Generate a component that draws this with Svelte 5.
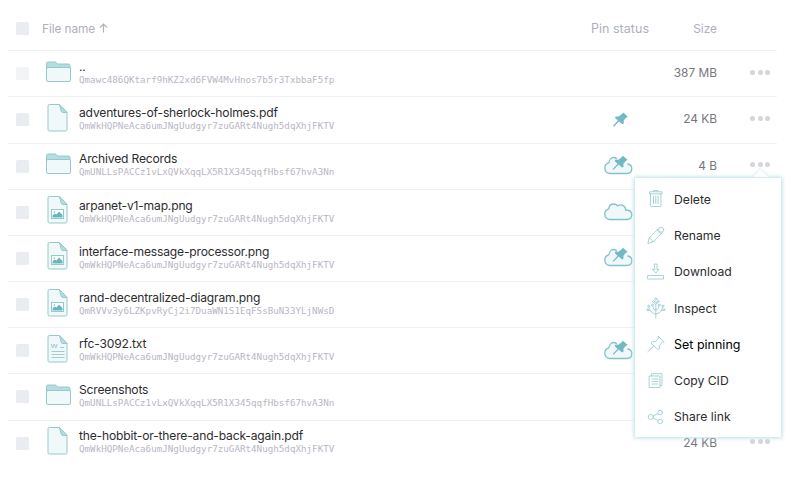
<script>
  const shared = 'QmWkHQPNeAca6umJNgUudgyr7zuGARt4Nugh5dqXhjFKTV';
  const folderCid = 'QmUNLLsPACCz1vLxQVkXqqLX5R1X345qqfHbsf67hvA3Nn';
  const files = [
    { name: '..', cid: 'Qmawc486QKtarf9hKZ2xd6FVW4MvHnos7b5r3TxbbaF5fp', icon: 'folder', pin: '', size: '387 MB', muted: true },
    { name: 'adventures-of-sherlock-holmes.pdf', cid: shared, icon: 'doc', pin: 'local', size: '24 KB' },
    { name: 'Archived Records', cid: folderCid, icon: 'folder', pin: 'both', size: '4 B' },
    { name: 'arpanet-v1-map.png', cid: shared, icon: 'image', pin: 'remote', size: '' },
    { name: 'interface-message-processor.png', cid: shared, icon: 'image', pin: 'both', size: '' },
    { name: 'rand-decentralized-diagram.png', cid: 'QmRVVv3y6LZKpvRyCj2i7DuaWN1S1EqFSsBuN33YLjNWsD', icon: 'image', pin: '', size: '' },
    { name: 'rfc-3092.txt', cid: shared, icon: 'text', pin: 'both', size: '' },
    { name: 'Screenshots', cid: folderCid, icon: 'folder', pin: '', size: '' },
    { name: 'the-hobbit-or-there-and-back-again.pdf', cid: shared, icon: 'doc', pin: '', size: '24 KB' }
  ];
  const actions = ['Delete', 'Rename', 'Download', 'Inspect', 'Set pinning', 'Copy CID', 'Share link'];
</script>

{#snippet fileIcon(kind)}
  {#if kind === 'folder'}
    <svg width="27" height="30" viewBox="0 0 27 30" fill="none" stroke="#94cace">
      <path d="M1.500 13V6.500q0-1.500 1.500-1.500h7q1 0 1.600 1t1.600 1h10.300q1.500 0 1.500 1.500V13z" fill="#b5dde0" />
      <rect x="1.500" y="10.500" width="24" height="14" rx="1.500" fill="#f0f8fa" />
    </svg>
  {:else}
    <svg width="27" height="30" viewBox="0 0 27 30" fill="none" stroke="#94cace">
      <path d="M4.500 1.500h10l7.500 8v17q0 1.500-1.500 1.500h-16q-1.500 0-1.500-1.500V3q0-1.500 1.500-1.500z" fill="#f0f8fa" />
      <path d="M14.500 1.500l7.500 8h-4q-1.800 0-2-2z" fill="#b5dde0" />
      {#if kind === 'image'}
        <rect x="6.500" y="14.500" width="12" height="9" fill="#fff" />
        <path d="M7.500 22.500v-2l2-2 2 1 2.500-3 3.500 3.500v2.500z" fill="#69b5bd" stroke="none" />
        <circle cx="9.500" cy="17" r=".8" fill="#69b5bd" stroke="none" />
      {:else if kind === 'text'}
        <path d="M6.300 10l1.300 4 1.600-4 1.600 4 1.400-4M15 13.500h4M6.500 17.500h13M6.500 20.500h13M6.500 23.500h13" stroke-width=".9" />
      {/if}
    </svg>
  {/if}
{/snippet}

{#snippet pinIcon(kind)}
  <svg width="30" height="22" viewBox="0 0 30 22" fill="none">
    {#if kind !== 'local'}
      <path
        d={kind === 'remote'
          ? 'M6.500 19.500a5.500 5.500 0 0 1-.8-10.700Q6.500 3.800 11 4q2.500.2 3.600 1.800 4.400-2.300 7.200 1.200 1 1.200.8 3Q28.800 10 28.800 14.500q0 5-5 5z'
          : 'M13.500 4.300Q7.500 1.500 5.700 8.800A5.500 5.500 0 0 0 6.500 19.500h17.300q5 0 5-5 0-3.800-4-4.500'}
        fill="#f0f8fa" stroke="#84c2c8" stroke-width="1.300" stroke-linecap="round" />
    {/if}
    {#if kind !== 'remote'}
      <g transform={kind === 'local' ? 'translate(1.500 2)' : 'translate(1.200 -.8)'}>
        <path d="M18.700 2.500l4.800 4.200-1.700.8-2.600 3 .1 3-1.400.8-3.400-2.900-4.900 5-1 .2.200-1 4.600-5.100-3-2.800.9-1.300 3 .1 3.400-2.800z" fill="#72bac1" />
      </g>
    {/if}
  </svg>
{/snippet}

{#snippet actionIcon(i)}
  <svg width="20" height="24" viewBox="0 0 20 24" fill="none" stroke="#9dcfd4" stroke-width=".9" stroke-linecap="round" stroke-linejoin="round">
    {#if i === 0}
      <path d="M4.500 6.500v12q0 1 1 1h8.500q1 0 1-1v-12M3.500 6.500v-1.700h12.500v1.700zM7.500 4.600V3.500h4.500v1.100M7.500 9v7.500M9.800 9v7.500M12.100 9v7.500" />
    {:else if i === 1}
      <path d="M2 20l1.100-5 9.200-9.200 3.900 3.900-9.200 9.200zM3.200 15q2.800.5 3.700 3.800M11 7.200l3.800 3.800" />
      <circle cx="15.200" cy="6.700" r="2.500" fill="#fff" />
    {:else if i === 2}
      <path d="M2 15.500h15.500v3.500H2zM8.500 4h2.500v5.500H13l-3.200 3.500-3.300-3.500h2z" />
    {:else if i === 3}
      <path d="M9.800 22V8M9.800 18q-5.800-.5-7-7M9.800 18q5.800-.5 7-7M9.800 14.500q-3-1-3.300-5M9.800 14.500q3-1 3.300-5M4.500 14.500L1.800 14M15.100 14.500l2.700-.5" />
      <g fill="#fff">
        <circle cx="9.800" cy="3" r="1.100" /><circle cx="7.500" cy="5.500" r="1" /><circle cx="12.100" cy="5.500" r="1" />
        <circle cx="9.800" cy="7.200" r="1.100" /><circle cx="6.400" cy="9" r=".9" /><circle cx="13.200" cy="9" r=".9" />
        <circle cx="2.700" cy="10" r="1" /><circle cx="16.900" cy="10" r="1" /><circle cx="1.500" cy="13.700" r=".8" /><circle cx="18.100" cy="13.700" r=".8" />
      </g>
    {:else if i === 4}
      <path d="M12.200 4.200l6 5.700-2 .3-3 3.600.2 3-1.600.8-6.800-6.500 1.200-1.500 3 .2 3.200-3.500zM7.800 14l-6 5.700" />
    {:else if i === 5}
      <path d="M3.500 7h10.500v11.500H3.500zM5.500 6.800V4.700H16v11.800h-1.800M6 10h5.800M6 12.500h5.800M6 15h5.800" />
    {:else}
      <circle cx="4.800" cy="12" r="2.600" /><circle cx="14.200" cy="7.500" r="2.300" /><circle cx="14.200" cy="16.500" r="2.300" />
      <path d="M7.200 11l4.800-2.500M7.200 13l4.800 2.500" />
    {/if}
  </svg>
{/snippet}

<main class="browser">
  <header class="row head">
    <span class="check"></span>
    <span class="title">File name <svg width="9" height="10" viewBox="0 0 9 10" fill="none" stroke="currentColor" stroke-width="1.100"><path d="M4.500 9.500V1M1 4.500L4.500 1 8 4.500" /></svg></span>
    <span class="pin">Pin status</span>
    <span class="size">Size</span>
    <span class="dots"></span>
  </header>
  {#each files as file}
    <div class="row file">
      <span class="check" class:muted={file.muted}></span>
      <span class="icon">{@render fileIcon(file.icon)}</span>
      <div class="info">
        <div class="name">{file.name}</div>
        <div class="cid">{file.cid}</div>
      </div>
      <span class="pin">{#if file.pin}{@render pinIcon(file.pin)}{/if}</span>
      <span class="size">{file.size}</span>
      <span class="dots"><i></i><i></i><i></i></span>
    </div>
  {/each}
  <nav class="menu">
    {#each actions as action, i}
      <div class="action" class:active={i === 4}>
        {@render actionIcon(i)}<span>{action}</span>
      </div>
    {/each}
  </nav>
</main>

<style>
  :global(body) { background: #fff; }
  .browser {
    position: relative;
    box-sizing: border-box;
    width: 801px;
    height: 478px;
    padding: 5px 24px 0 8px;
    overflow: hidden;
    font-family: Inter, 'Open Sans', sans-serif;
    color: #2c2c30;
  }
  .row {
    display: flex;
    align-items: center;
    box-sizing: border-box;
    height: 46.180px;
    border-bottom: 1px solid #f0f2f4;
  }
  .file:last-of-type { border-color: transparent; }
  .head { color: #b0b0ba; font-size: 12.500px; padding-top: 2px; }
  .check {
    flex: none;
    width: 13px;
    height: 13px;
    margin-left: 8px;
    border-radius: 1.500px;
    background: #e9edf1;
  }
  .check.muted { background: #f1f3f5; }
  .title { flex: 1; margin-left: 13px; font-size: 11.900px; letter-spacing: -.1px; }
  .icon { flex: none; width: 27px; height: 30px; margin: -4px 0 0 16px; }
  svg { display: block; }
  .title svg { display: inline-block; margin-left: 1px; }
  .info { flex: 1; min-width: 0; margin: -3.500px 0 0 7px; }
  .name { font-size: 12.100px; letter-spacing: -.18px; line-height: 15px; white-space: nowrap; }
  .cid {
    font: 9.220px/11px 'DejaVu Sans Mono', monospace;
    color: #b9b6c4;
    white-space: nowrap;
  }
  .pin { flex: none; display: flex; justify-content: center; width: 80px; white-space: nowrap; letter-spacing: .04px; }
  .file .pin { margin: -2px 2px 0 -2px; }
  .size { flex: none; width: 57px; margin-right: 1px; text-align: right; font-size: 11.900px; color: #77777e; white-space: nowrap; }
  .head .size { color: inherit; }
  .file .size { margin-top: -2px; }
  .dots { flex: none; display: flex; gap: 2.600px; width: 27px; margin: -3px 0 0 32px; }
  .dots i { width: 5px; height: 5px; border-radius: 50%; background: #d5d5da; }
  .menu {
    position: absolute;
    left: 635px;
    top: 178px;
    box-sizing: border-box;
    width: 146px;
    height: 259px;
    padding-top: 3px;
    background: #fff;
    box-shadow: 0 0 4px 1px #b9dfe3;
  }
  .menu::before {
    content: '';
    position: absolute;
    left: 119px;
    top: -6px;
    width: 13px;
    height: 13px;
    background: #fff;
    transform: rotate(45deg);
    box-shadow: -1px -1px 2px #d9eef0;
    clip-path: polygon(-30% -30%, 110% -30%, -30% 110%);
  }
  .action {
    display: flex;
    align-items: center;
    height: 36.300px;
    padding-left: 11px;
    gap: 8px;
    font-size: 12.200px;
    white-space: nowrap;
  }
  .active { color: #000; font-size: 12.500px; }
</style>
